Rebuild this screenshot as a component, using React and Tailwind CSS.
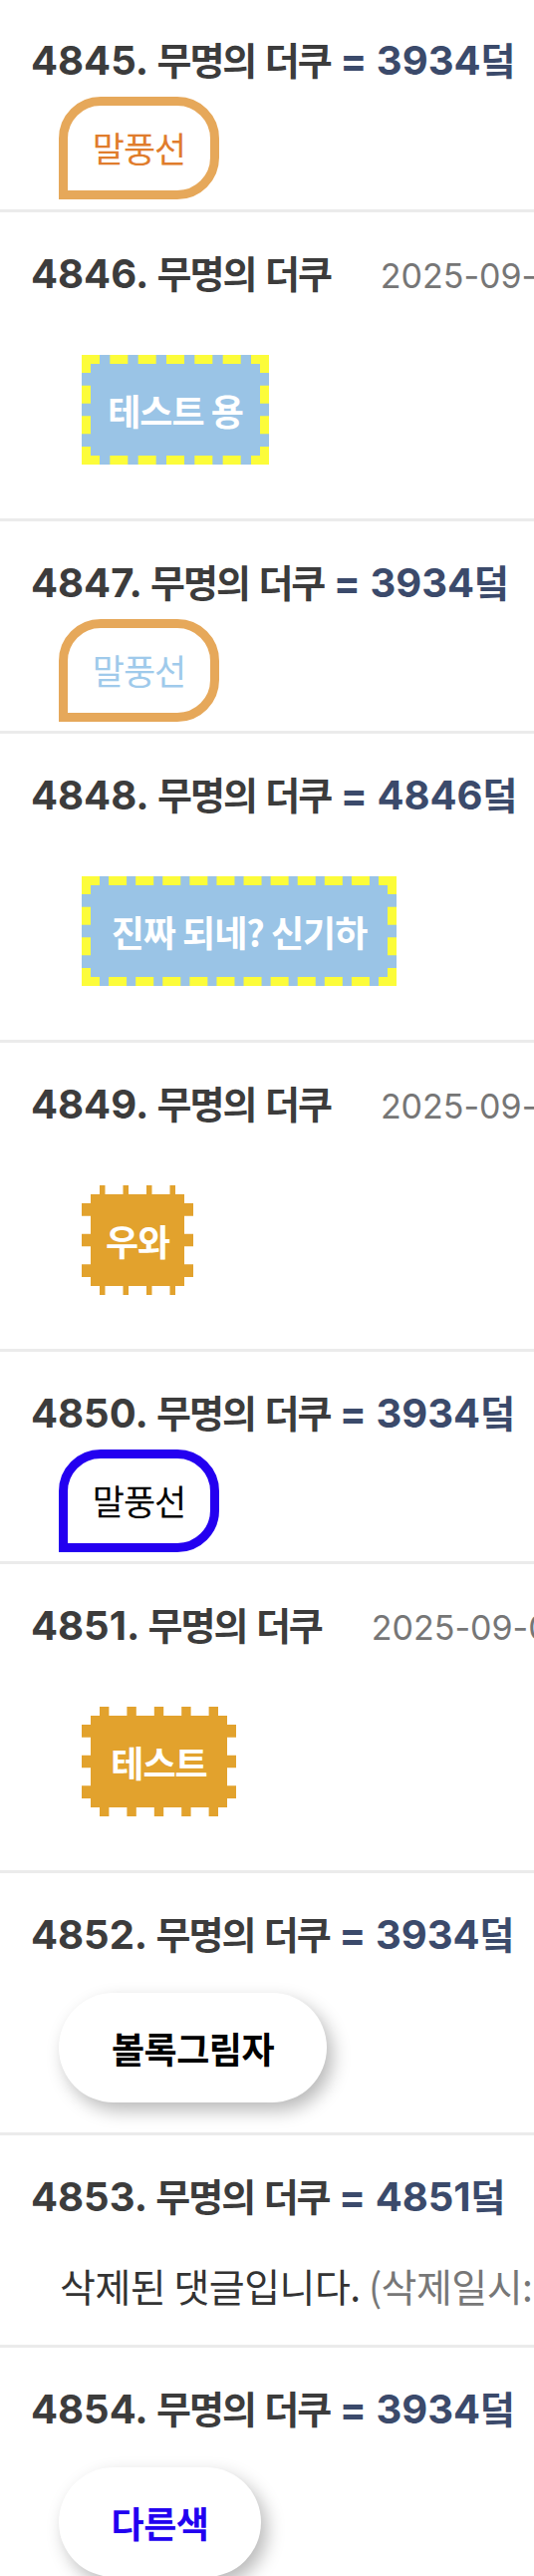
const kr = "font-['Noto_Sans_CJK_KR',sans-serif]";

const Header = ({ no, score, date }) => (
  <div className="h-[44px] leading-[44px] whitespace-nowrap text-[40px] font-bold text-[#3c3c3c] font-['Inter','Noto_Sans_CJK_KR',sans-serif]">
    <span>{no}.</span>{' '}
    <span className={`${kr} text-[38px] tracking-[-2px]`}>무명의</span>{' '}
    <span className={`${kr} text-[38px] tracking-[-2px]`}>더쿠</span>
    {score ? (
      <span className="text-[#3b4a6b]">
        {' '}= {score}
        <span className={`${kr} text-[38px]`}>덬</span>
      </span>
    ) : (
      <span className="ml-[50px] font-normal text-[34px] text-[#767676]">{date}</span>
    )}
  </div>
);

const Item = ({ first, pb, children, ...head }) => (
  <div className={`${first ? 'pt-[37px]' : 'pt-[38px]'} ${pb} pl-[31px] border-b-[3px] border-[#ebebeb] overflow-hidden`}>
    <Header {...head} />
    {children}
  </div>
);

// 말풍선: rounded except bottom-left
const Bubble = ({ border, text }) => (
  <div className={`mt-[16px] ml-[28px] w-[161px] h-[103px] flex items-center justify-center border-[9px] rounded-[42px] rounded-bl-none ${border}`}>
    <span className={`${kr} text-[35px] tracking-[-1px] ${text}`}>말풍선</span>
  </div>
);

// dashed box / stamp
const Dashed = ({ w, cls, children }) => (
  <div className={`mt-[61px] ml-[51px] h-[110px] flex items-center justify-center border-[9px] border-dashed ${w} ${cls}`}>
    <span className={`${kr} text-[36px] font-bold text-white tracking-[-1px] whitespace-nowrap`}>{children}</span>
  </div>
);

const Pill = ({ w, text, children }) => (
  <div className={`mt-[38px] ml-[28px] h-[110px] rounded-full bg-white flex items-center justify-center shadow-[6px_8px_18px_rgba(0,0,0,0.28)] ${w}`}>
    <span className={`${kr} text-[36px] font-bold tracking-[-0.5px] ${text}`}>{children}</span>
  </div>
);

export default function App() {
  return (
    <div className="w-[536px] h-[2584px] overflow-hidden bg-white">
      <Item first no="4845" score="3934" pb="pb-[10px]">
        <Bubble border="border-[#e6a85a]" text="text-[#e07c2c]" />
      </Item>

      <Item no="4846" date="2025-09-04 13:21" pb="pb-[54px]">
        <Dashed w="w-[188px]" cls="bg-[#9ac4e6] border-[#fcfc3a]">테스트 용</Dashed>
      </Item>

      <Item no="4847" score="3934" pb="pb-[9px]">
        <Bubble border="border-[#e6a85a]" text="text-[#9fcaeb]" />
      </Item>

      <Item no="4848" score="4846" pb="pb-[54px]">
        <Dashed w="w-[316px]" cls="bg-[#9ac4e6] border-[#fcfc3a]">진짜 되네? 신기하</Dashed>
      </Item>

      <Item no="4849" date="2025-09-04 13:25" pb="pb-[54px]">
        <Dashed w="w-[112px]" cls="bg-[#e2a22d] border-white">우와</Dashed>
      </Item>

      <Item no="4850" score="3934" pb="pb-[9px]">
        <Bubble border="border-[#2400f0]" text="text-black" />
      </Item>

      <Item no="4851" date="2025-09-04 13:30" pb="pb-[54px]">
        <Dashed w="w-[155px]" cls="bg-[#e2a22d] border-white">테스트</Dashed>
      </Item>

      <Item no="4852" score="3934" pb="pb-[30px]">
        <Pill w="w-[269px]" text="text-black">볼록그림자</Pill>
      </Item>

      <Item no="4853" score="4851" pb="pb-[35px]">
        <div className={`mt-[43px] ml-[29px] h-[50px] leading-[50px] whitespace-nowrap text-[39px] tracking-[-0.5px] ${kr}`}>
          <span className="text-[#333]">삭제된 댓글입니다.</span>{' '}
          <span className="text-[#777]">(삭제일시: 2025-09-04 13:40)</span>
        </div>
      </Item>

      <Item no="4854" score="3934" pb="pb-[30px]">
        <Pill w="w-[203px]" text="text-[#2200f0]">다른색</Pill>
      </Item>
    </div>
  );
}
